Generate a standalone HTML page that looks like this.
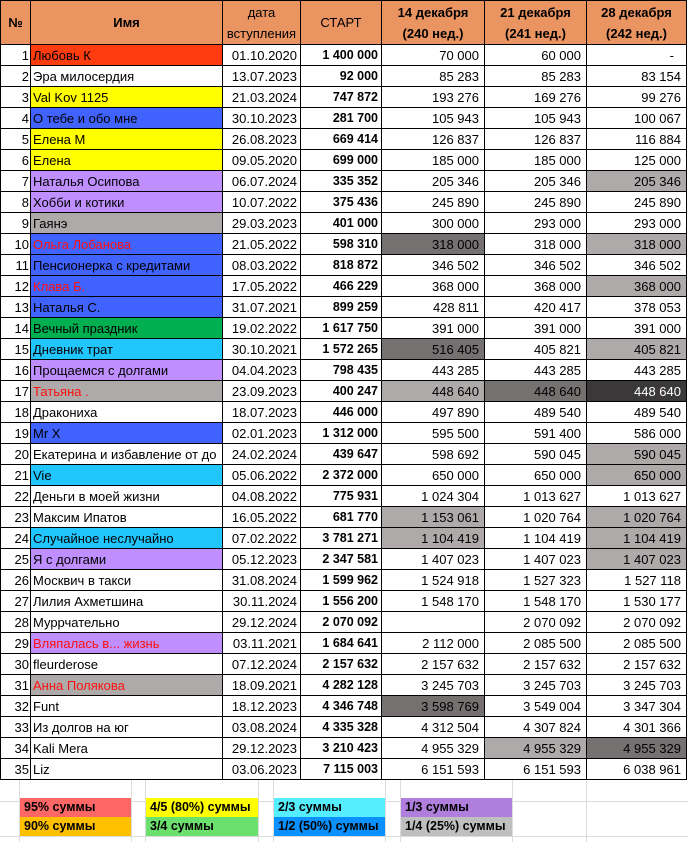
<!DOCTYPE html>
<html><head><meta charset="utf-8">
<style>
html,body{margin:0;padding:0;background:#fff;width:688px;height:842px;overflow:hidden;font-family:"Liberation Sans",sans-serif;}
table{border-collapse:collapse;table-layout:fixed;position:absolute;left:0;top:0;}
td{border:1px solid #000;height:20px;padding:0 3px;font-size:13px;white-space:nowrap;overflow:hidden;color:#000;}
th{border:1px solid #000;height:43px;background:#EA9462;font-size:13px;font-weight:bold;padding:0;line-height:21px;}
th.n{font-weight:normal;}
td.i{text-align:right;padding:0 1px;}
td.nm{padding:0 2px;}
td.d{text-align:right;}
td.s{text-align:right;font-weight:bold;font-size:12.5px;}
td.v{text-align:right;padding-right:5px;}
.r{color:#ff1010;}
.L{background:#AEAAAA;} .M{background:#767171;} .D{background:#3A3838;color:#fff;}
.cR{background:#FF3B10;} .cY{background:#FFFF00;} .cB{background:#4062FF;} .cP{background:#BF8FFF;} .cG{background:#AEAAAA;} .cGr{background:#00B050;} .cC{background:#22C6FF;}
.leg{position:absolute;font-size:12.5px;font-weight:bold;height:19px;line-height:19px;padding-left:4px;box-sizing:border-box;}
.gl{position:absolute;background:#dcdcdc;}
</style></head><body>
<div class="gl" style="left:0;top:801px;width:688px;height:1px"></div>
<div class="gl" style="left:0;top:836px;width:688px;height:1px"></div>
<div class="gl" style="left:19px;top:780px;width:1px;height:62px"></div>
<div class="gl" style="left:131px;top:780px;width:1px;height:62px"></div>
<div class="gl" style="left:145px;top:780px;width:1px;height:62px"></div>
<div class="gl" style="left:258px;top:780px;width:1px;height:62px"></div>
<div class="gl" style="left:273px;top:780px;width:1px;height:62px"></div>
<div class="gl" style="left:385px;top:780px;width:1px;height:62px"></div>
<div class="gl" style="left:400px;top:780px;width:1px;height:62px"></div>
<div class="gl" style="left:512px;top:780px;width:1px;height:62px"></div>
<div class="gl" style="left:586px;top:780px;width:1px;height:62px"></div>
<div class="leg" style="left:20px;top:798px;width:111px;background:#FF6666">95% суммы</div>
<div class="leg" style="left:20px;top:817px;width:111px;background:#FFC000">90% суммы</div>
<div class="leg" style="left:146px;top:798px;width:112px;background:#FFFF00">4/5 (80%) суммы</div>
<div class="leg" style="left:146px;top:817px;width:112px;background:#6CE06C">3/4 суммы</div>
<div class="leg" style="left:274px;top:798px;width:111px;background:#55EEFF">2/3 суммы</div>
<div class="leg" style="left:274px;top:817px;width:111px;background:#0A90FF">1/2 (50%) суммы</div>
<div class="leg" style="left:401px;top:798px;width:111px;background:#B07FDD">1/3 суммы</div>
<div class="leg" style="left:401px;top:817px;width:111px;background:#BFBFBF">1/4 (25%) суммы</div>
<table>
<colgroup><col style="width:30px"><col style="width:192px"><col style="width:78px"><col style="width:81px"><col style="width:103px"><col style="width:102px"><col style="width:100px"></colgroup>
<tr><th>№</th><th>Имя</th><th class="n">дата<br>вступления</th><th class="n">СТАРТ</th><th>14 декабря<br>(240 нед.)</th><th>21 декабря<br>(241 нед.)</th><th>28 декабря<br>(242 нед.)</th></tr>
<tr><td class="i">1</td><td class="nm cR">Любовь К</td><td class="d">01.10.2020</td><td class="s">1 400 000</td><td class="v">70 000</td><td class="v">60 000</td><td class="v" style="padding-right:12px">-</td></tr>
<tr><td class="i">2</td><td class="nm">Эра милосердия</td><td class="d">13.07.2023</td><td class="s">92 000</td><td class="v">85 283</td><td class="v">85 283</td><td class="v">83 154</td></tr>
<tr><td class="i">3</td><td class="nm cY">Val Kov 1125</td><td class="d">21.03.2024</td><td class="s">747 872</td><td class="v">193 276</td><td class="v">169 276</td><td class="v">99 276</td></tr>
<tr><td class="i">4</td><td class="nm cB">О тебе и обо мне</td><td class="d">30.10.2023</td><td class="s">281 700</td><td class="v">105 943</td><td class="v">105 943</td><td class="v">100 067</td></tr>
<tr><td class="i">5</td><td class="nm cY">Елена М</td><td class="d">26.08.2023</td><td class="s">669 414</td><td class="v">126 837</td><td class="v">126 837</td><td class="v">116 884</td></tr>
<tr><td class="i">6</td><td class="nm cY">Елена</td><td class="d">09.05.2020</td><td class="s">699 000</td><td class="v">185 000</td><td class="v">185 000</td><td class="v">125 000</td></tr>
<tr><td class="i">7</td><td class="nm cP">Наталья Осипова</td><td class="d">06.07.2024</td><td class="s">335 352</td><td class="v">205 346</td><td class="v">205 346</td><td class="v L">205 346</td></tr>
<tr><td class="i">8</td><td class="nm cP">Хобби и котики</td><td class="d">10.07.2022</td><td class="s">375 436</td><td class="v">245 890</td><td class="v">245 890</td><td class="v">245 890</td></tr>
<tr><td class="i">9</td><td class="nm cG">Гаянэ</td><td class="d">29.03.2023</td><td class="s">401 000</td><td class="v">300 000</td><td class="v">293 000</td><td class="v">293 000</td></tr>
<tr><td class="i">10</td><td class="nm cB r">Ольга Лобанова</td><td class="d">21.05.2022</td><td class="s">598 310</td><td class="v M">318 000</td><td class="v">318 000</td><td class="v L">318 000</td></tr>
<tr><td class="i">11</td><td class="nm cB">Пенсионерка с кредитами</td><td class="d">08.03.2022</td><td class="s">818 872</td><td class="v">346 502</td><td class="v">346 502</td><td class="v">346 502</td></tr>
<tr><td class="i">12</td><td class="nm cB r">Клава Б.</td><td class="d">17.05.2022</td><td class="s">466 229</td><td class="v">368 000</td><td class="v">368 000</td><td class="v L">368 000</td></tr>
<tr><td class="i">13</td><td class="nm cB">Наталья С.</td><td class="d">31.07.2021</td><td class="s">899 259</td><td class="v">428 811</td><td class="v">420 417</td><td class="v">378 053</td></tr>
<tr><td class="i">14</td><td class="nm cGr">Вечный праздник</td><td class="d">19.02.2022</td><td class="s">1 617 750</td><td class="v">391 000</td><td class="v">391 000</td><td class="v">391 000</td></tr>
<tr><td class="i">15</td><td class="nm cC">Дневник трат</td><td class="d">30.10.2021</td><td class="s">1 572 265</td><td class="v M">516 405</td><td class="v">405 821</td><td class="v L">405 821</td></tr>
<tr><td class="i">16</td><td class="nm cP">Прощаемся с долгами</td><td class="d">04.04.2023</td><td class="s">798 435</td><td class="v">443 285</td><td class="v">443 285</td><td class="v">443 285</td></tr>
<tr><td class="i">17</td><td class="nm cG r">Татьяна .</td><td class="d">23.09.2023</td><td class="s">400 247</td><td class="v L">448 640</td><td class="v M">448 640</td><td class="v D">448 640</td></tr>
<tr><td class="i">18</td><td class="nm">Дракониха</td><td class="d">18.07.2023</td><td class="s">446 000</td><td class="v">497 890</td><td class="v">489 540</td><td class="v">489 540</td></tr>
<tr><td class="i">19</td><td class="nm cB">Mr X</td><td class="d">02.01.2023</td><td class="s">1 312 000</td><td class="v">595 500</td><td class="v">591 400</td><td class="v">586 000</td></tr>
<tr><td class="i">20</td><td class="nm" style="overflow:visible">Екатерина и избавление от до</td><td class="d">24.02.2024</td><td class="s">439 647</td><td class="v">598 692</td><td class="v">590 045</td><td class="v L">590 045</td></tr>
<tr><td class="i">21</td><td class="nm cC">Vie</td><td class="d">05.06.2022</td><td class="s">2 372 000</td><td class="v">650 000</td><td class="v">650 000</td><td class="v L">650 000</td></tr>
<tr><td class="i">22</td><td class="nm">Деньги в моей жизни</td><td class="d">04.08.2022</td><td class="s">775 931</td><td class="v">1 024 304</td><td class="v">1 013 627</td><td class="v">1 013 627</td></tr>
<tr><td class="i">23</td><td class="nm">Максим Ипатов</td><td class="d">16.05.2022</td><td class="s">681 770</td><td class="v L">1 153 061</td><td class="v">1 020 764</td><td class="v L">1 020 764</td></tr>
<tr><td class="i">24</td><td class="nm cC">Случайное неслучайно</td><td class="d">07.02.2022</td><td class="s">3 781 271</td><td class="v L">1 104 419</td><td class="v">1 104 419</td><td class="v L">1 104 419</td></tr>
<tr><td class="i">25</td><td class="nm cP">Я с долгами</td><td class="d">05.12.2023</td><td class="s">2 347 581</td><td class="v">1 407 023</td><td class="v">1 407 023</td><td class="v L">1 407 023</td></tr>
<tr><td class="i">26</td><td class="nm">Москвич в такси</td><td class="d">31.08.2024</td><td class="s">1 599 962</td><td class="v">1 524 918</td><td class="v">1 527 323</td><td class="v">1 527 118</td></tr>
<tr><td class="i">27</td><td class="nm">Лилия Ахметшина</td><td class="d">30.11.2024</td><td class="s">1 556 200</td><td class="v">1 548 170</td><td class="v">1 548 170</td><td class="v">1 530 177</td></tr>
<tr><td class="i">28</td><td class="nm">Муррчательно</td><td class="d">29.12.2024</td><td class="s">2 070 092</td><td class="v"></td><td class="v">2 070 092</td><td class="v">2 070 092</td></tr>
<tr><td class="i">29</td><td class="nm cP r">Вляпалась в... жизнь</td><td class="d">03.11.2021</td><td class="s">1 684 641</td><td class="v">2 112 000</td><td class="v">2 085 500</td><td class="v">2 085 500</td></tr>
<tr><td class="i">30</td><td class="nm">fleurderose</td><td class="d">07.12.2024</td><td class="s">2 157 632</td><td class="v">2 157 632</td><td class="v">2 157 632</td><td class="v">2 157 632</td></tr>
<tr><td class="i">31</td><td class="nm cG r">Анна Полякова</td><td class="d">18.09.2021</td><td class="s">4 282 128</td><td class="v">3 245 703</td><td class="v">3 245 703</td><td class="v">3 245 703</td></tr>
<tr><td class="i">32</td><td class="nm">Funt</td><td class="d">18.12.2023</td><td class="s">4 346 748</td><td class="v M">3 598 769</td><td class="v">3 549 004</td><td class="v">3 347 304</td></tr>
<tr><td class="i">33</td><td class="nm">Из долгов на юг</td><td class="d">03.08.2024</td><td class="s">4 335 328</td><td class="v">4 312 504</td><td class="v">4 307 824</td><td class="v">4 301 366</td></tr>
<tr><td class="i">34</td><td class="nm">Kali Mera</td><td class="d">29.12.2023</td><td class="s">3 210 423</td><td class="v">4 955 329</td><td class="v L">4 955 329</td><td class="v M">4 955 329</td></tr>
<tr><td class="i">35</td><td class="nm">Liz</td><td class="d">03.06.2023</td><td class="s">7 115 003</td><td class="v">6 151 593</td><td class="v">6 151 593</td><td class="v">6 038 961</td></tr>
</table>
</body></html>
